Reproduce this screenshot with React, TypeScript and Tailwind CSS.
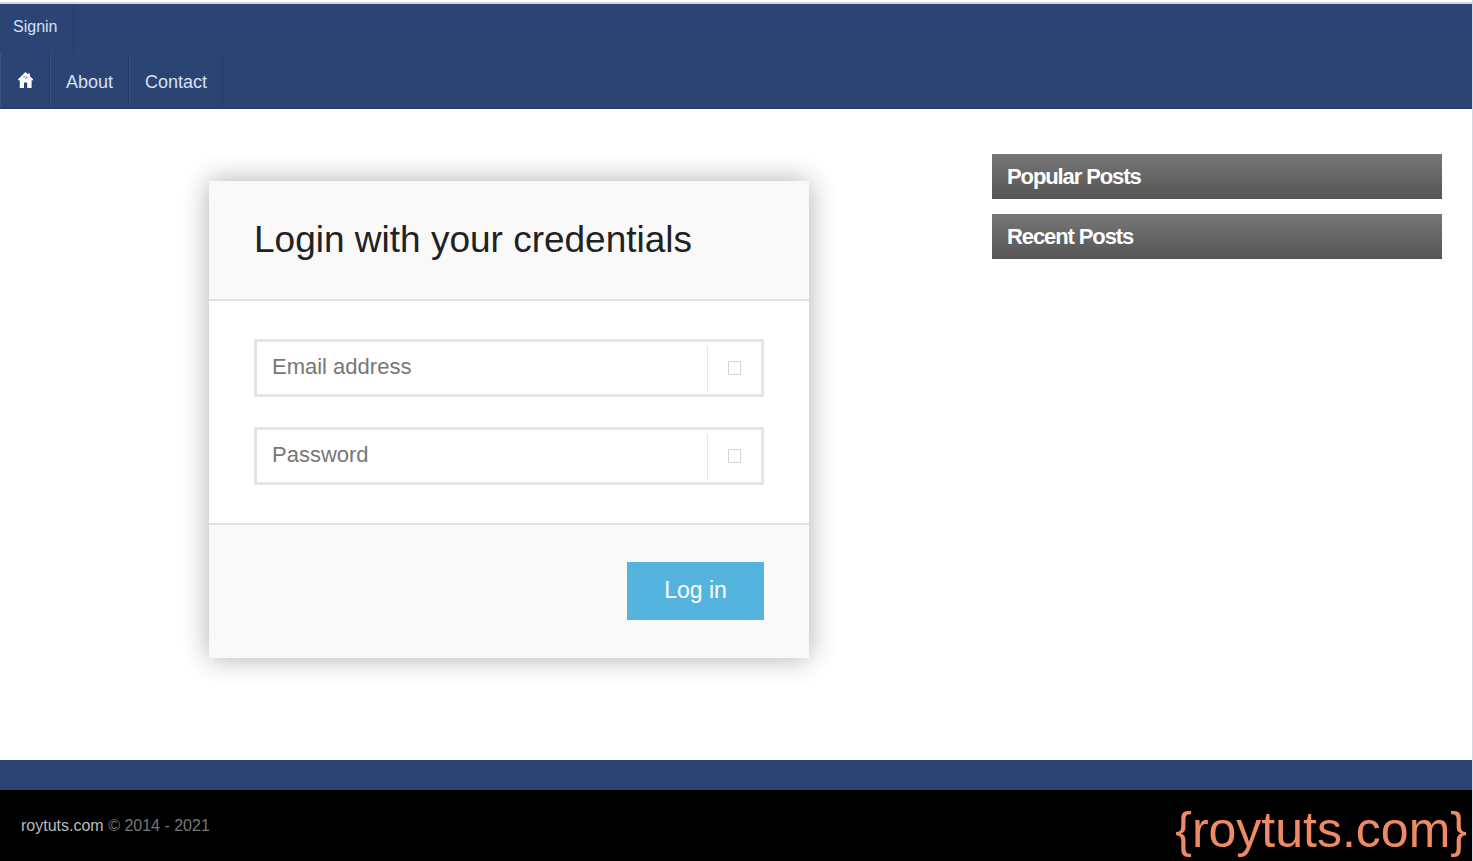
function HomeIcon() {
  return (
    <svg width="15" height="16" viewBox="0 0 15 16" fill="currentColor" aria-hidden="true">
      <path d="M7.5 0 L10 2.2 V1.6 H12 V4.2 L15 7.2 V8.2 H13.6 V16 H9.2 V10.6 H6 V16 H1.8 V8.2 H0 V7.2 Z" />
      <path d="M5.6 4h1.3v1.3H5.6zM8.2 4.4h1.2v1.5H8.2zM7 5.8h1.2v1.2H7z" fill="#2b4474" fillOpacity="0.7" />
    </svg>
  );
}

type FieldProps = { id: string; label: string; type: string };

function Field({ id, label, type }: FieldProps) {
  return (
    <div className="flex h-[58px] items-center border-3 border-[#e5e5e5] bg-white">
      <input
        id={id}
        name={id}
        type={type}
        aria-label={label}
        placeholder={label}
        className="h-full min-w-0 flex-1 bg-transparent px-[15px] pb-[2px] text-[22px] text-[#444] outline-none placeholder:text-[#777]"
      />
      <span className="flex h-[45px] w-[54px] items-center justify-center border-l border-[#e5e5e5]" aria-hidden="true">
        <svg width="13" height="14" viewBox="0 0 13 14" fill="none" stroke="#d4d4d4">
          <rect x="0.5" y="0.5" width="12" height="13" />
        </svg>
      </span>
    </div>
  );
}

function SideTitle({ children }: { children: string }) {
  return (
    <h2 className="flex h-[45px] items-center bg-linear-to-b from-[#777] to-[#555] px-[15px] text-[22px] font-bold tracking-tighter text-white">
      {children}
    </h2>
  );
}

const navItem =
  "flex items-center border-r border-r-[#223a66] border-l border-l-[#375285] px-[15px] pt-1 text-lg";

export default function App() {
  return (
    <div className="flex min-h-screen flex-col border-r border-[#d5d9e2] bg-white pt-[2px] font-['Liberation_Sans',Arial,sans-serif]">
      <header className="border-t-2 border-b-2 border-t-[#cdd7e8] border-b-[#263e69] bg-[#2b4474] text-[#d5e0f5]">
        <nav aria-label="Account" className="flex h-[49px]">
          <a href="#signin" className="flex items-center border-r border-[#223a66] pr-4 pb-1 pl-[13px] text-base">
            Signin
          </a>
        </nav>
        <nav aria-label="Main" className="flex h-[54px]">
          <a href="#home" aria-label="Home" className={`${navItem} text-white`}>
            <span className="flex w-[18px] justify-center pb-1">
              <HomeIcon />
            </span>
          </a>
          <a href="#about" className={navItem}>
            About
          </a>
          <a href="#contact" className={navItem}>
            Contact
          </a>
        </nav>
      </header>

      <main className="flex flex-1 px-[30px] pt-[45px]">
        <section className="flex-1 pt-[27px] pr-1 pb-[102px]">
          <form
            className="mx-auto max-w-[600px] bg-white shadow-[0_0_26px_rgba(0,0,0,0.32)]"
            onSubmit={(event) => event.preventDefault()}
          >
            <div className="flex h-[120px] items-center border-b-2 border-[#e2e2e2] bg-[#f9f9f9] px-[45px]">
              <h1 className="text-[37px] text-[#222]">Login with your credentials</h1>
            </div>
            <div className="flex flex-col gap-[30px] px-[45px] py-[38px]">
              <Field id="email" label="Email address" type="email" />
              <Field id="password" label="Password" type="password" />
            </div>
            <div className="flex justify-end border-t-2 border-[#e2e2e2] bg-[#f9f9f9] px-[45px] pt-[37px] pb-[38px]">
              <button type="submit" className="h-[58px] w-[137px] bg-[#55b4de] pb-[2px] text-[23px] text-white">
                Log in
              </button>
            </div>
          </form>
        </section>
        <aside className="flex w-[450px] flex-col gap-[15px]">
          <SideTitle>Popular Posts</SideTitle>
          <SideTitle>Recent Posts</SideTitle>
        </aside>
      </main>

      <footer className="border-t-[30px] border-[#2b4474] bg-black">
        <div className="flex h-[71px] items-center justify-between pr-[5px] pl-[21px]">
          <p className="text-base text-[#777]">
            <a href="#home" className="text-[#bbb]">
              roytuts.com
            </a>{" "}
            © 2014 - 2021
          </p>
          <p className="pt-2 text-[50px] leading-none text-[#f08a65]">{"{roytuts.com}"}</p>
        </div>
      </footer>
    </div>
  );
}
